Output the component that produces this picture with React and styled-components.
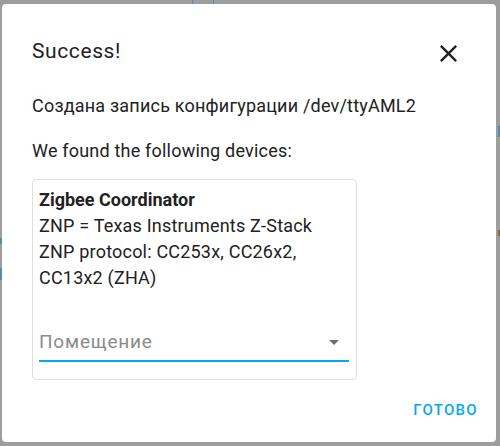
import React from 'react';
import styled, { createGlobalStyle } from 'styled-components';

const GlobalStyle = createGlobalStyle`
  html, body {
    margin: 0;
    padding: 0;
  }
  body {
    background: #9d9d9d;
    font-family: Roboto, 'Noto Sans', sans-serif;
    -webkit-font-smoothing: antialiased;
  }
`;

const Backdrop = styled.div`
  position: relative;
  width: 500px;
  height: 446px;
  padding: 4px 4px 4px 2px;
  box-sizing: border-box;
  overflow: hidden;
`;

// bits of the page behind the scrim that peek out at the edges
const Peek = styled.span`
  position: absolute;
  background: ${(props) => props.color || '#4f8db5'};
`;

const Dialog = styled.div`
  position: relative;
  height: 100%;
  background: #fff;
  border-radius: 4px;
  box-sizing: border-box;
  padding: 31px 18px 0 30px;
  display: flex;
  flex-direction: column;
  color: #212121;
`;

const Header = styled.div`
  display: flex;
  align-items: flex-start;
  justify-content: space-between;
`;

const Title = styled.h2`
  margin: 0;
  font-size: 21px;
  line-height: 32px;
  font-weight: 400;
  letter-spacing: 0.6px;
  color: #212121;
`;

const CloseButton = styled.button`
  border: 0;
  background: none;
  padding: 0;
  margin: 4px 15px 0 0;
  width: 29px;
  height: 29px;
  display: flex;
  color: #212121;
  cursor: pointer;
`;

const Text = styled.p`
  margin: ${(props) => props.top || 0}px 0 0 0;
  font-size: 18px;
  line-height: 24px;
  letter-spacing: 0.2px;
  color: #212121;
`;

const Card = styled.div`
  margin-top: 16px;
  width: 325px;
  box-sizing: border-box;
  border: 1px solid #e0e0e0;
  border-radius: 4px;
  padding: 7px 7px 17px 6px;
`;

const DeviceName = styled.div`
  font-size: 18px;
  font-weight: 700;
  line-height: 26px;
`;

const DeviceInfo = styled.div`
  font-size: 18px;
  line-height: 26px;
  letter-spacing: 0.2px;
`;

const Select = styled.div`
  margin-top: 15px;
  height: 56px;
  box-sizing: border-box;
  border-bottom: 2px solid #03a9f4;
  display: flex;
  align-items: flex-end;
  justify-content: space-between;
  padding-bottom: 6px;
`;

const Placeholder = styled.span`
  font-size: 19px;
  line-height: 24px;
  letter-spacing: 0.8px;
  color: #8a8a8a;
`;

const Arrow = styled.svg`
  width: 24px;
  height: 24px;
  margin: 0 3px 0 0;
  fill: #6f6f6f;
`;

const Footer = styled.div`
  margin-top: 12px;
  display: flex;
  justify-content: flex-end;
`;

const DoneButton = styled.button`
  border: 0;
  background: none;
  padding: 0 0 0 8px;
  height: 36px;
  font-family: Roboto, 'Noto Sans', sans-serif;
  font-size: 15px;
  font-weight: 500;
  letter-spacing: 1.3px;
  color: #03a9f4;
  cursor: pointer;
`;

const App = () => (
  <>
    <GlobalStyle />
    <Backdrop>
      <Peek style={{ left: 192, top: 0, width: 1, height: 4 }} />
      <Peek style={{ left: 213, top: 0, width: 1, height: 4 }} />
      <Peek style={{ left: 0, top: 238, width: 2, height: 6 }} />
      <Peek style={{ left: 0, top: 268, width: 2, height: 12 }} />
      <Peek style={{ left: 498, top: 126, width: 2, height: 11 }} />
      <Peek style={{ left: 498, top: 230, width: 2, height: 6 }} color="#8a6a4a" />
      <Dialog>
        <Header>
          <Title>Success!</Title>
          <CloseButton aria-label="close">
            <svg viewBox="5 5 14 14" width="17" height="17" style={{ margin: 'auto' }}>
              <path
                fill="currentColor"
                d="M19,6.41L17.59,5L12,10.59L6.41,5L5,6.41L10.59,12L5,17.59L6.41,19L12,13.41L17.59,19L19,17.59L13.41,12L19,6.41Z"
              />
            </svg>
          </CloseButton>
        </Header>
        <Text top={26}>Создана запись конфигурации /dev/ttyAML2</Text>
        <Text top={21}>We found the following devices:</Text>
        <Card>
          <DeviceName>Zigbee Coordinator</DeviceName>
          <DeviceInfo>ZNP = Texas Instruments Z-Stack</DeviceInfo>
          <DeviceInfo>ZNP protocol: CC253x, CC26x2, CC13x2 (ZHA)</DeviceInfo>
          <Select>
            <Placeholder>Помещение</Placeholder>
            <Arrow viewBox="0 0 24 24">
              <path d="M7,10L12,15L17,10H7Z" />
            </Arrow>
          </Select>
        </Card>
        <Footer>
          <DoneButton>ГОТОВО</DoneButton>
        </Footer>
      </Dialog>
    </Backdrop>
  </>
);

export default App;
